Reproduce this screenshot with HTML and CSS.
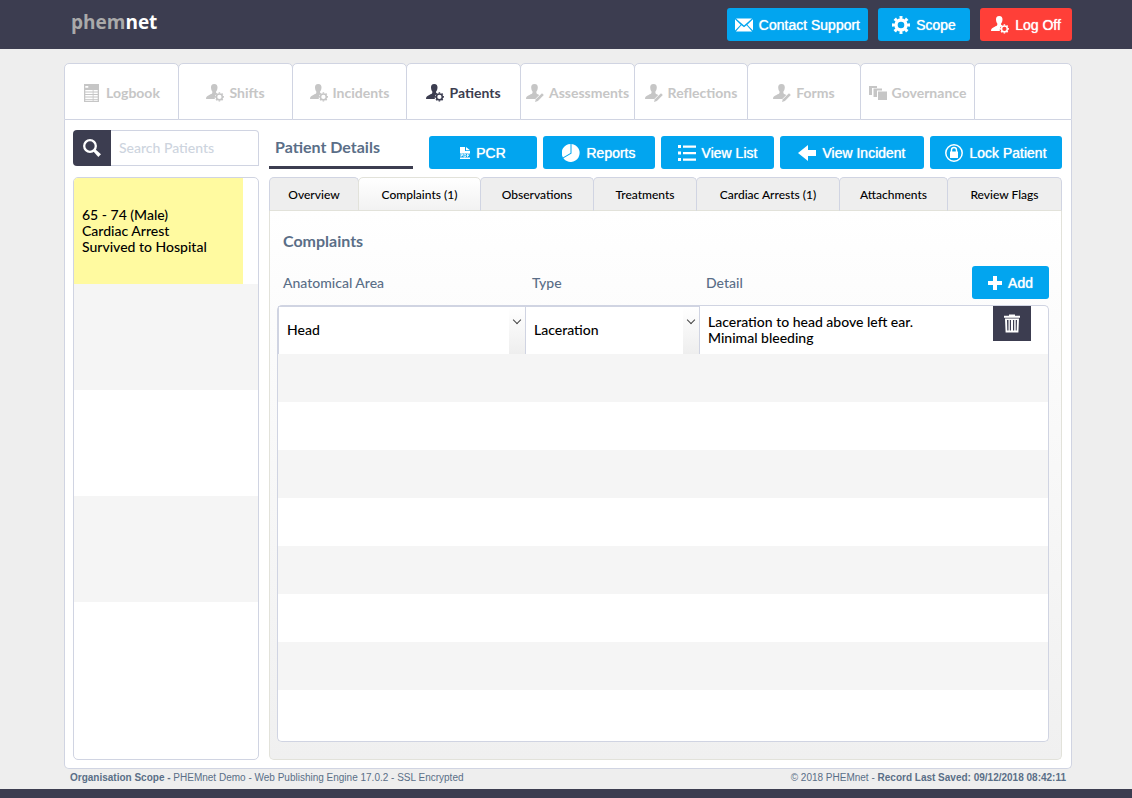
FILE: index.html
```html
<!DOCTYPE html>
<html lang="en">

<head>
  <meta charset="UTF-8" />
  <meta name="viewport" content="width=device-width, initial-scale=1.0" />
  <title>PHEMnet</title>
  <link rel="stylesheet" href="styles.css">
</head>

<body>
  <!-- Icons -->
  <svg class="sprite" aria-hidden="true">
    <symbol id="gear" viewBox="0 0 18 18">
      <circle cx="9" cy="9" r="5" fill="none" stroke="currentColor" stroke-width="3.4" />
      <circle cx="9" cy="9" r="7.5" fill="none" stroke="currentColor" stroke-width="3" pathLength="16" stroke-dasharray="1 1" stroke-dashoffset="0.5" />
    </symbol>
    <symbol id="user" viewBox="0 0 18 18">
      <path d="M8.200 0C5.800 0 4.900 1.500 5 3.600c.1 1.900.6 3.100 1.300 4v1.200c-.2 1-1.400 1.400-3 2.100C1.200 11.800 0 12.500 0 15h8.800c-.2-2.300.6-4.200 2.200-5.400-.6-.3-.9-.5-.9-1V7.600c.8-.9 1.300-2.100 1.400-4C11.600 1.500 10.700 0 8.200 0z" />
    </symbol>
    <symbol id="user-gear" viewBox="0 0 18 18">
      <use href="#user" width="18" height="18" />
      <circle cx="13.400" cy="12.900" r="2.900" fill="none" stroke="currentColor" stroke-width="1.500" />
      <circle cx="13.400" cy="12.900" r="4" fill="none" stroke="currentColor" stroke-width="1.300" pathLength="16" stroke-dasharray="1 1" stroke-dashoffset="0.5" />
    </symbol>
    <symbol id="user-pen" viewBox="0 0 18 18">
      <path d="M8.500 0C6 0 5.100 1.500 5.200 3.600c.1 1.900.6 3.100 1.300 4v1.200c-.2 1-1.400 1.400-3 2.100C1.200 11.800 0 12.500 0 15h9.300l4-4.100-2.100-1c-.5-.2-.8-.5-.8-1.100V7.600c.8-.9 1.300-2.100 1.400-4C11.900 1.500 11 0 8.500 0z" />
      <path d="M16 9.200l1.800 1.700-5.900 6.100-2.900 1 .9-2.700z" />
    </symbol>
    <symbol id="logbook" viewBox="0 0 18 18">
      <path fill-rule="evenodd" d="M1 0h15v18H1zM2.300 2v1.800h3V2zM2.300 6v1.500h7.400V6zm8.200 0v1.500h4.200V6zM2.300 8.500v1.500h7.400V8.500zm8.200 0v1.500h4.200V8.500zM2.300 11v1.500h7.400V11zm8.200 0v1.500h4.200V11zM2.300 13.500v3.200h7.400v-3.200zm8.200 0v3.200h4.200v-3.200z" />
      <path d="M2 15h13v.8H2z" />
    </symbol>
    <symbol id="stack" viewBox="0 0 18 18">
      <path d="M0 2h8v2H3v7H0zM4.500 4.500h8.500v2H8v6.500H4.500zM9 7.500h9V16H9z" />
    </symbol>
    <symbol id="mail" viewBox="0 0 18 18">
      <path d="M1 2.500h16L9 9.500zM0 3.200l5.700 5.500L0 14.500zM18 3.200v11.300l-5.700-5.800zM6.400 9.300L9 11.300l2.600-2 5.500 6.200H.9z" />
    </symbol>
    <symbol id="search" viewBox="0 0 18 18">
      <circle cx="7" cy="7" r="5.800" fill="none" stroke="currentColor" stroke-width="2.300" />
      <path d="M10 12l2-2 6 5.300-2.700 2.700z" />
    </symbol>
    <symbol id="pdf" viewBox="0 0 10 12">
      <path d="M0 0h5v4h5v2.500H0zM6 0l4 3.200H6zM0 10.500h10V12H0z" />
      <path d="M1 10V7h1.500v1.500H1M4 7h1l1 1v1l-1 1H4zM7.500 10V7h2M7.500 8.500H9" fill="none" stroke="currentColor" stroke-width=".8" />
    </symbol>
    <symbol id="pie" viewBox="0 0 18 18">
      <path d="M8.500 0v9L.9 13.500A9 9 0 0 1 8.500 0zM9.500 0a9 9 0 1 1-8.100 14.300L9.500 9.500z" />
    </symbol>
    <symbol id="list" viewBox="0 0 18 18">
      <path d="M0 1h3v3H0zM5 1.500h13v2.200H5zM0 7.500h3v3H0zM5 8h13v2.200H5zM0 14h3v3H0zM5 14.500h13v2.200H5z" />
    </symbol>
    <symbol id="back" viewBox="0 0 18 18">
      <path d="M0 9l10-8v5h8v6h-8v5z" />
    </symbol>
    <symbol id="lock" viewBox="0 0 18 18">
      <circle cx="9" cy="9" r="8.200" fill="none" stroke="currentColor" stroke-width="1.500" />
      <path d="M6.500 8V6a2.500 2.500 0 0 1 5 0v2" fill="none" stroke="currentColor" stroke-width="1.400" />
      <path d="M5 7.500h8V14H5z" />
    </symbol>
    <symbol id="plus" viewBox="0 0 14 14">
      <path d="M5 0h4v5h5v4H9v5H5V9H0V5h5z" />
    </symbol>
    <symbol id="bin" viewBox="0 0 18 18">
      <path fill-rule="evenodd" d="M6 0h6v1.200h5v2H1v-2h5zM2 4h14l-.6 14H2.600zM4 5.500l.3 10.500h1.200V5.500zm2.800 0V16H8V5.500zm3.200 0V16h1.200V5.500zm2.700 0V16h1L14 5.500z" />
    </symbol>
  </svg>

  <header class="topbar">
    <div class="logo">phem<span>net</span></div>
    <div class="topButtons">
      <button class="btn"><svg class="icon"><use href="#mail" /></svg>Contact Support</button>
      <button class="btn"><svg class="icon"><use href="#gear" /></svg>Scope</button>
      <button class="btn btnRed"><svg class="icon"><use href="#user-gear" /></svg>Log Off</button>
    </div>
  </header>

  <main class="page">
    <nav class="mainNav">
      <a href="#"><svg class="icon"><use href="#logbook" /></svg>Logbook</a>
      <a href="#"><svg class="icon"><use href="#user-gear" /></svg>Shifts</a>
      <a href="#"><svg class="icon"><use href="#user-gear" /></svg>Incidents</a>
      <a href="#" class="active"><svg class="icon"><use href="#user-gear" /></svg>Patients</a>
      <a href="#"><svg class="icon"><use href="#user-pen" /></svg>Assessments</a>
      <a href="#"><svg class="icon"><use href="#user-pen" /></svg>Reflections</a>
      <a href="#"><svg class="icon"><use href="#user-pen" /></svg>Forms</a>
      <a href="#"><svg class="icon"><use href="#stack" /></svg>Governance</a>
      <span class="navEnd"></span>
    </nav>

    <div class="content">
      <!-- Patient list -->
      <aside class="sidebar">
        <form class="search">
          <button type="button" class="searchBtn" aria-label="Search"><svg class="icon"><use href="#search" /></svg></button>
          <input type="text" placeholder="Search Patients" aria-label="Search Patients" />
        </form>
        <ul class="patientList">
          <li class="selected">65 - 74 (Male)<br />Cardiac Arrest<br />Survived to Hospital</li>
          <li></li>
          <li></li>
          <li></li>
          <li></li>
        </ul>
      </aside>

      <!-- Patient details -->
      <section class="details">
        <div class="toolbar">
          <h1>Patient Details</h1>
          <div class="toolButtons">
            <button class="btn"><svg class="icon iconPdf"><use href="#pdf" /></svg>PCR</button>
            <button class="btn"><svg class="icon"><use href="#pie" /></svg>Reports</button>
            <button class="btn"><svg class="icon"><use href="#list" /></svg>View List</button>
            <button class="btn"><svg class="icon"><use href="#back" /></svg>View Incident</button>
            <button class="btn"><svg class="icon"><use href="#lock" /></svg>Lock Patient</button>
          </div>
        </div>

        <div class="tabs">
          <button>Overview</button>
          <button class="active">Complaints (1)</button>
          <button>Observations</button>
          <button>Treatments</button>
          <button>Cardiac Arrests (1)</button>
          <button>Attachments</button>
          <button>Review Flags</button>
        </div>

        <div class="panel">
          <h2>Complaints</h2>
          <table class="complaints">
            <thead>
              <tr>
                <th class="colArea">Anatomical Area</th>
                <th class="colType">Type</th>
                <th>
                  <div class="headDetail">Detail
                    <button class="btn"><svg class="icon iconPlus"><use href="#plus" /></svg>Add</button>
                  </div>
                </th>
              </tr>
            </thead>
            <tbody>
              <tr>
                <td>
                  <div class="selectWrap">
                    <select aria-label="Anatomical Area"><option>Head</option></select>
                  </div>
                </td>
                <td>
                  <div class="selectWrap">
                    <select aria-label="Type"><option>Laceration</option></select>
                  </div>
                </td>
                <td>
                  <div class="detailCell">
                    <textarea aria-label="Detail">Laceration to head above left ear.
Minimal bleeding</textarea>
                    <button class="delBtn" aria-label="Delete"><svg class="icon iconBin"><use href="#bin" /></svg></button>
                  </div>
                </td>
              </tr>
              <tr><td></td><td></td><td></td></tr>
              <tr><td></td><td></td><td></td></tr>
              <tr><td></td><td></td><td></td></tr>
              <tr><td></td><td></td><td></td></tr>
              <tr><td></td><td></td><td></td></tr>
              <tr><td></td><td></td><td></td></tr>
              <tr><td></td><td></td><td></td></tr>
              <tr><td></td><td></td><td></td></tr>
            </tbody>
          </table>
        </div>
      </section>
    </div>
  </main>

  <footer class="footer">
    <div><b>Organisation Scope - </b>PHEMnet Demo - Web Publishing Engine 17.0.2 - SSL Encrypted</div>
    <div>© 2018 PHEMnet - <b>Record Last Saved: 09/12/2018 08:42:11</b></div>
  </footer>
</body>

</html>
```
FILE: styles.css
```css
* {
  box-sizing: border-box;
}

body {
  margin: 0;
  min-height: 100vh;
  display: flex;
  flex-direction: column;
  background-color: #eeeeee;
  border-bottom: 9px solid #3c3d50;
  font-family: "Trebuchet MS", Lato, sans-serif;
  font-size: 14px;
  font-weight: 500;
  line-height: 16px;
  color: #000;
}

button,
input,
select,
textarea {
  font: inherit;
  color: inherit;
  margin: 0;
  border: none;
  border-radius: 0;
}

button {
  cursor: pointer;
}

h1,
h2 {
  margin: 0;
  font-size: 16px;
  line-height: 20px;
  font-weight: bold;
  color: #5a6e87;
}

.sprite {
  position: absolute;
  width: 0;
  height: 0;
}

.icon {
  width: 18px;
  height: 18px;
  flex-shrink: 0;
  fill: currentColor;
}

.iconPdf {
  width: 10px;
  height: 12px;
}

.iconPlus {
  width: 14px;
  height: 14px;
}

.iconBin {
  height: 19px;
}

/* Header */
.topbar {
  display: flex;
  justify-content: space-between;
  height: 49px;
  padding: 8px 60px 8px 71px;
  background-color: #3c3d50;
}

.logo {
  font-family: "Open Sans", sans-serif;
  font-size: 19px;
  line-height: 29px;
  font-weight: bold;
  color: #aaaaaa;
}

.logo span {
  color: #fff;
}

.topButtons {
  display: flex;
  gap: 10px;
}

.topButtons .btn {
  min-width: 92px;
  padding: 0 8px;
}

.btn {
  display: flex;
  align-items: center;
  justify-content: center;
  gap: 6px;
  height: 33px;
  padding: 0 16px;
  border-radius: 3px;
  background-color: #02a5ef;
  color: #fff;
  font-family: "Liberation Sans", Arial, sans-serif;
  font-size: 14px;
  font-weight: normal;
  white-space: nowrap;
  text-shadow: 0 0 1px #fff;
}

.btn:hover {
  background-color: #0293d5;
}

.btnRed {
  background-color: #ff3f38;
}

/* Main card */
.page {
  margin: 14px 60px 0 64px;
}

.mainNav {
  display: grid;
  grid-template-columns: 114fr 114fr 114fr 114fr 114fr 113fr 113fr 114fr 98fr;
}

.mainNav a,
.navEnd {
  display: flex;
  align-items: center;
  justify-content: center;
  gap: 5px;
  height: 57px;
  padding-top: 3px;
  margin-right: -1px;
  border: 1px solid #d0d4e2;
  border-radius: 5px 5px 0 0;
  background-color: #fff;
  color: #c6c6c6;
  font-weight: bold;
  text-decoration: none;
}

.mainNav a.active {
  color: #3c3d50;
}

.mainNav .navEnd {
  margin-right: 0;
}

.content {
  display: flex;
  gap: 10px;
  padding: 10px 9px 8px 8px;
  border: 1px solid #d0d4e2;
  border-top: none;
  border-radius: 0 0 5px 5px;
  background-color: #fff;
}

/* Sidebar */
.sidebar {
  display: flex;
  flex-direction: column;
  width: 186px;
  flex-shrink: 0;
}

.search {
  display: flex;
  height: 36px;
  margin-bottom: 11px;
}

.searchBtn {
  width: 38px;
  padding: 2px 0 0;
  border-radius: 4px 0 0 4px;
  background-color: #3c3d50;
  color: #fff;
}

.search input {
  flex: 1;
  min-width: 0;
  padding: 0 8px;
  border: 1px solid #d0d4e2;
  border-left: none;
  border-radius: 0 4px 0 0;
}

.search input::placeholder {
  color: #cdd4de;
}

.patientList {
  flex: 1;
  display: flex;
  flex-direction: column;
  list-style: none;
  margin: 0;
  padding: 0;
  border: 1px solid #d0d4e2;
  border-radius: 5px;
  overflow: hidden;
}

.patientList li {
  height: 106px;
  padding: 29px 8px;
}

.patientList li:nth-child(even) {
  background-color: #f5f5f5;
}

.patientList .selected {
  margin-right: 15px;
  background-color: #fffaa0;
}

/* Details */
.details {
  flex: 1;
  min-width: 0;
}

.toolbar {
  display: flex;
  gap: 16px;
  padding-top: 6px;
  margin-bottom: 8px;
}

.toolbar h1 {
  width: 144px;
  height: 33px;
  padding: 1px 6px 0;
  border-bottom: 3px solid #3c3d50;
  white-space: nowrap;
}

.toolButtons {
  flex: 1;
  display: grid;
  grid-template-columns: 108fr 112fr 113fr 144fr 132fr;
  gap: 6px;
}

.toolButtons .btn {
  padding: 0;
}

.tabs {
  display: grid;
  grid-template-columns: 89fr 122fr 113fr 103fr 143fr 108fr 115fr;
}

.tabs button {
  height: 34px;
  padding: 2px 0 0;
  margin-right: -1px;
  border: 1px solid #d0d4e2;
  border-bottom-color: #e2e2da;
  border-radius: 5px 5px 0 0;
  background-color: #eeeeee;
  font-size: 12px;
  white-space: nowrap;
}

.tabs button:last-child {
  margin-right: 0;
}

.tabs button.active {
  border-color: #e2e2da;
  background: linear-gradient(#fff, #f2f2f2);
}

.panel {
  padding: 20px 12px 17px 7px;
  border: 1px solid #e2e2da;
  border-top: none;
  border-radius: 0 0 5px 5px;
  background: linear-gradient(#fff, #f0f0f0);
}

.panel h2 {
  padding-left: 6px;
  margin-bottom: 15px;
}

/* Complaints table */
.complaints {
  width: 100%;
  table-layout: fixed;
  border-collapse: separate;
  border-spacing: 0;
}

.colArea {
  width: 249px;
}

.colType {
  width: 174px;
}

.complaints th {
  padding: 0 0 6px 6px;
  text-align: left;
  font-weight: inherit;
  color: #5a6e87;
}

.headDetail {
  display: flex;
  align-items: center;
  justify-content: space-between;
}

.complaints td {
  height: 48px;
  padding: 0;
  background-color: #fff;
}

.complaints tr:nth-child(even) td {
  background-color: #f5f5f5;
}

.complaints td:first-child {
  border-left: 1px solid #d0d4e2;
}

.complaints td:last-child {
  border-right: 1px solid #d0d4e2;
}

.complaints tbody tr:first-child td {
  height: 49px;
  border-top: 1px solid #d0d4e2;
}

.complaints tbody tr:last-child td {
  height: 52px;
  border-bottom: 1px solid #d0d4e2;
}

.complaints tbody tr:first-child td:first-child {
  border-top-left-radius: 5px;
}

.complaints tbody tr:first-child td:last-child {
  border-top-right-radius: 5px;
}

.complaints tbody tr:last-child td:first-child {
  border-bottom-left-radius: 5px;
}

.complaints tbody tr:last-child td:last-child {
  border-bottom-right-radius: 5px;
}

.selectWrap {
  position: relative;
  height: 48px;
  border-top: 1px solid #d0d4e2;
  border-right: 1px solid #d0d4e2;
}

.complaints td:first-child .selectWrap {
  border-left: 1px solid #d0d4e2;
}

.selectWrap select {
  appearance: none;
  width: 100%;
  height: 47px;
  padding: 0 24px 2px 8px;
  background: linear-gradient(#fff, #eeeeee) right / 16px 100% no-repeat #fff;
}

/* chevron over the right edge of the drop-down */
.selectWrap::after {
  content: "";
  position: absolute;
  top: 10px;
  right: 5px;
  width: 5px;
  height: 5px;
  border: solid #444;
  border-width: 0 1px 1px 0;
  transform: rotate(45deg);
  pointer-events: none;
}

.detailCell {
  display: flex;
  align-items: flex-start;
  height: 48px;
  padding-right: 17px;
}

.detailCell textarea {
  flex: 1;
  min-width: 0;
  height: 48px;
  padding: 8px;
  background: none;
  resize: none;
  overflow: hidden;
}

.delBtn {
  display: flex;
  align-items: center;
  justify-content: center;
  width: 38px;
  height: 35px;
  padding: 0;
  background-color: #3c3d50;
  color: #fff;
}

/* Footer */
.footer {
  display: flex;
  justify-content: space-between;
  padding: 3px 66px 5px 70px;
  font-family: "Liberation Sans", Arial, sans-serif;
  font-size: 10px;
  font-weight: normal;
  line-height: 12px;
  color: #5a6e87;
}
```
